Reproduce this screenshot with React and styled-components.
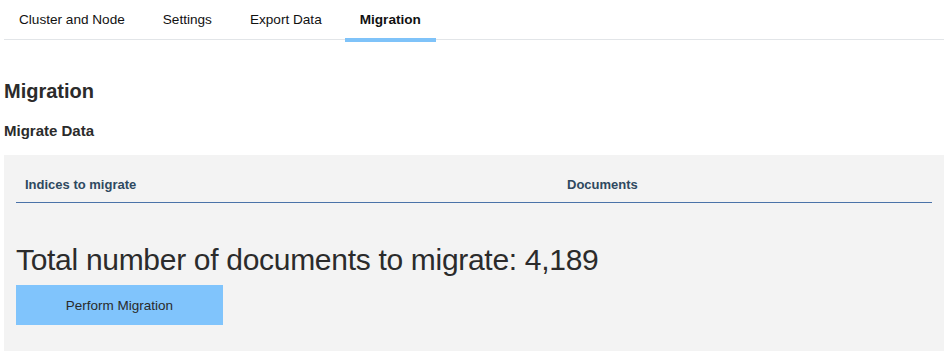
import React from 'react'
import styled, { createGlobalStyle } from 'styled-components'

const GlobalStyle = createGlobalStyle`
  body {
    margin: 0;
    background: #fff;
    font-family: "Liberation Sans", Arial, Helvetica, sans-serif;
    color: #333;
  }
`

const Page = styled.div`
  padding: 0 5px 0 4px;
`

const TabBar = styled.nav`
  display: flex;
  gap: 8px;
  border-bottom: 1px solid #e2e5e8;
`

const Tab = styled.div`
  padding: 0 15px;
  height: 38px;
  line-height: 40px;
  font-size: 13.6px;
  color: #111;
  font-weight: ${p => (p.$active ? 'bold' : 'normal')};
  border-bottom: 4px solid ${p => (p.$active ? '#7fc3f9' : 'transparent')};
  margin-bottom: -3px;
  cursor: pointer;
`

const Heading = styled.h2`
  margin: 39px 0 0;
  font-size: 20px;
  line-height: 24px;
  font-weight: bold;
  color: #2b2b2b;
`

const SubHeading = styled.h3`
  margin: 19px 0 0;
  font-size: 15px;
  line-height: 18px;
  font-weight: bold;
  color: #2b2b2b;
`

const Panel = styled.section`
  margin-top: 15px;
  background: #f3f3f3;
  padding: 12px 12px 26px;
  height: 196px;
  box-sizing: border-box;
`

const TableHead = styled.div`
  display: grid;
  grid-template-columns: 542px 1fr;
  border-bottom: 1px solid #4a72a8;
`

const HeadCell = styled.div`
  padding: 0 9px;
  height: 35px;
  line-height: 36px;
  font-size: 13px;
  font-weight: bold;
  color: #2e4960;
`

const Total = styled.div`
  margin-top: 39px;
  font-size: 30px;
  line-height: 36px;
  color: #2b2b2b;
  letter-spacing: -0.3px;
`

const Button = styled.button`
  display: block;
  margin-top: 7px;
  width: 207px;
  height: 40px;
  border: none;
  background: #80c4fc;
  color: #2a2a2a;
  font-family: inherit;
  font-size: 13.5px;
  cursor: pointer;
`

const tabs = ['Cluster and Node', 'Settings', 'Export Data', 'Migration']

export default function App() {
  return (
    <Page>
      <GlobalStyle />
      <TabBar>
        {tabs.map(t => (
          <Tab key={t} $active={t === 'Migration'}>{t}</Tab>
        ))}
      </TabBar>
      <Heading>Migration</Heading>
      <SubHeading>Migrate Data</SubHeading>
      <Panel>
        <TableHead>
          <HeadCell>Indices to migrate</HeadCell>
          <HeadCell>Documents</HeadCell>
        </TableHead>
        <Total>Total number of documents to migrate: 4,189</Total>
        <Button>Perform Migration</Button>
      </Panel>
    </Page>
  )
}
